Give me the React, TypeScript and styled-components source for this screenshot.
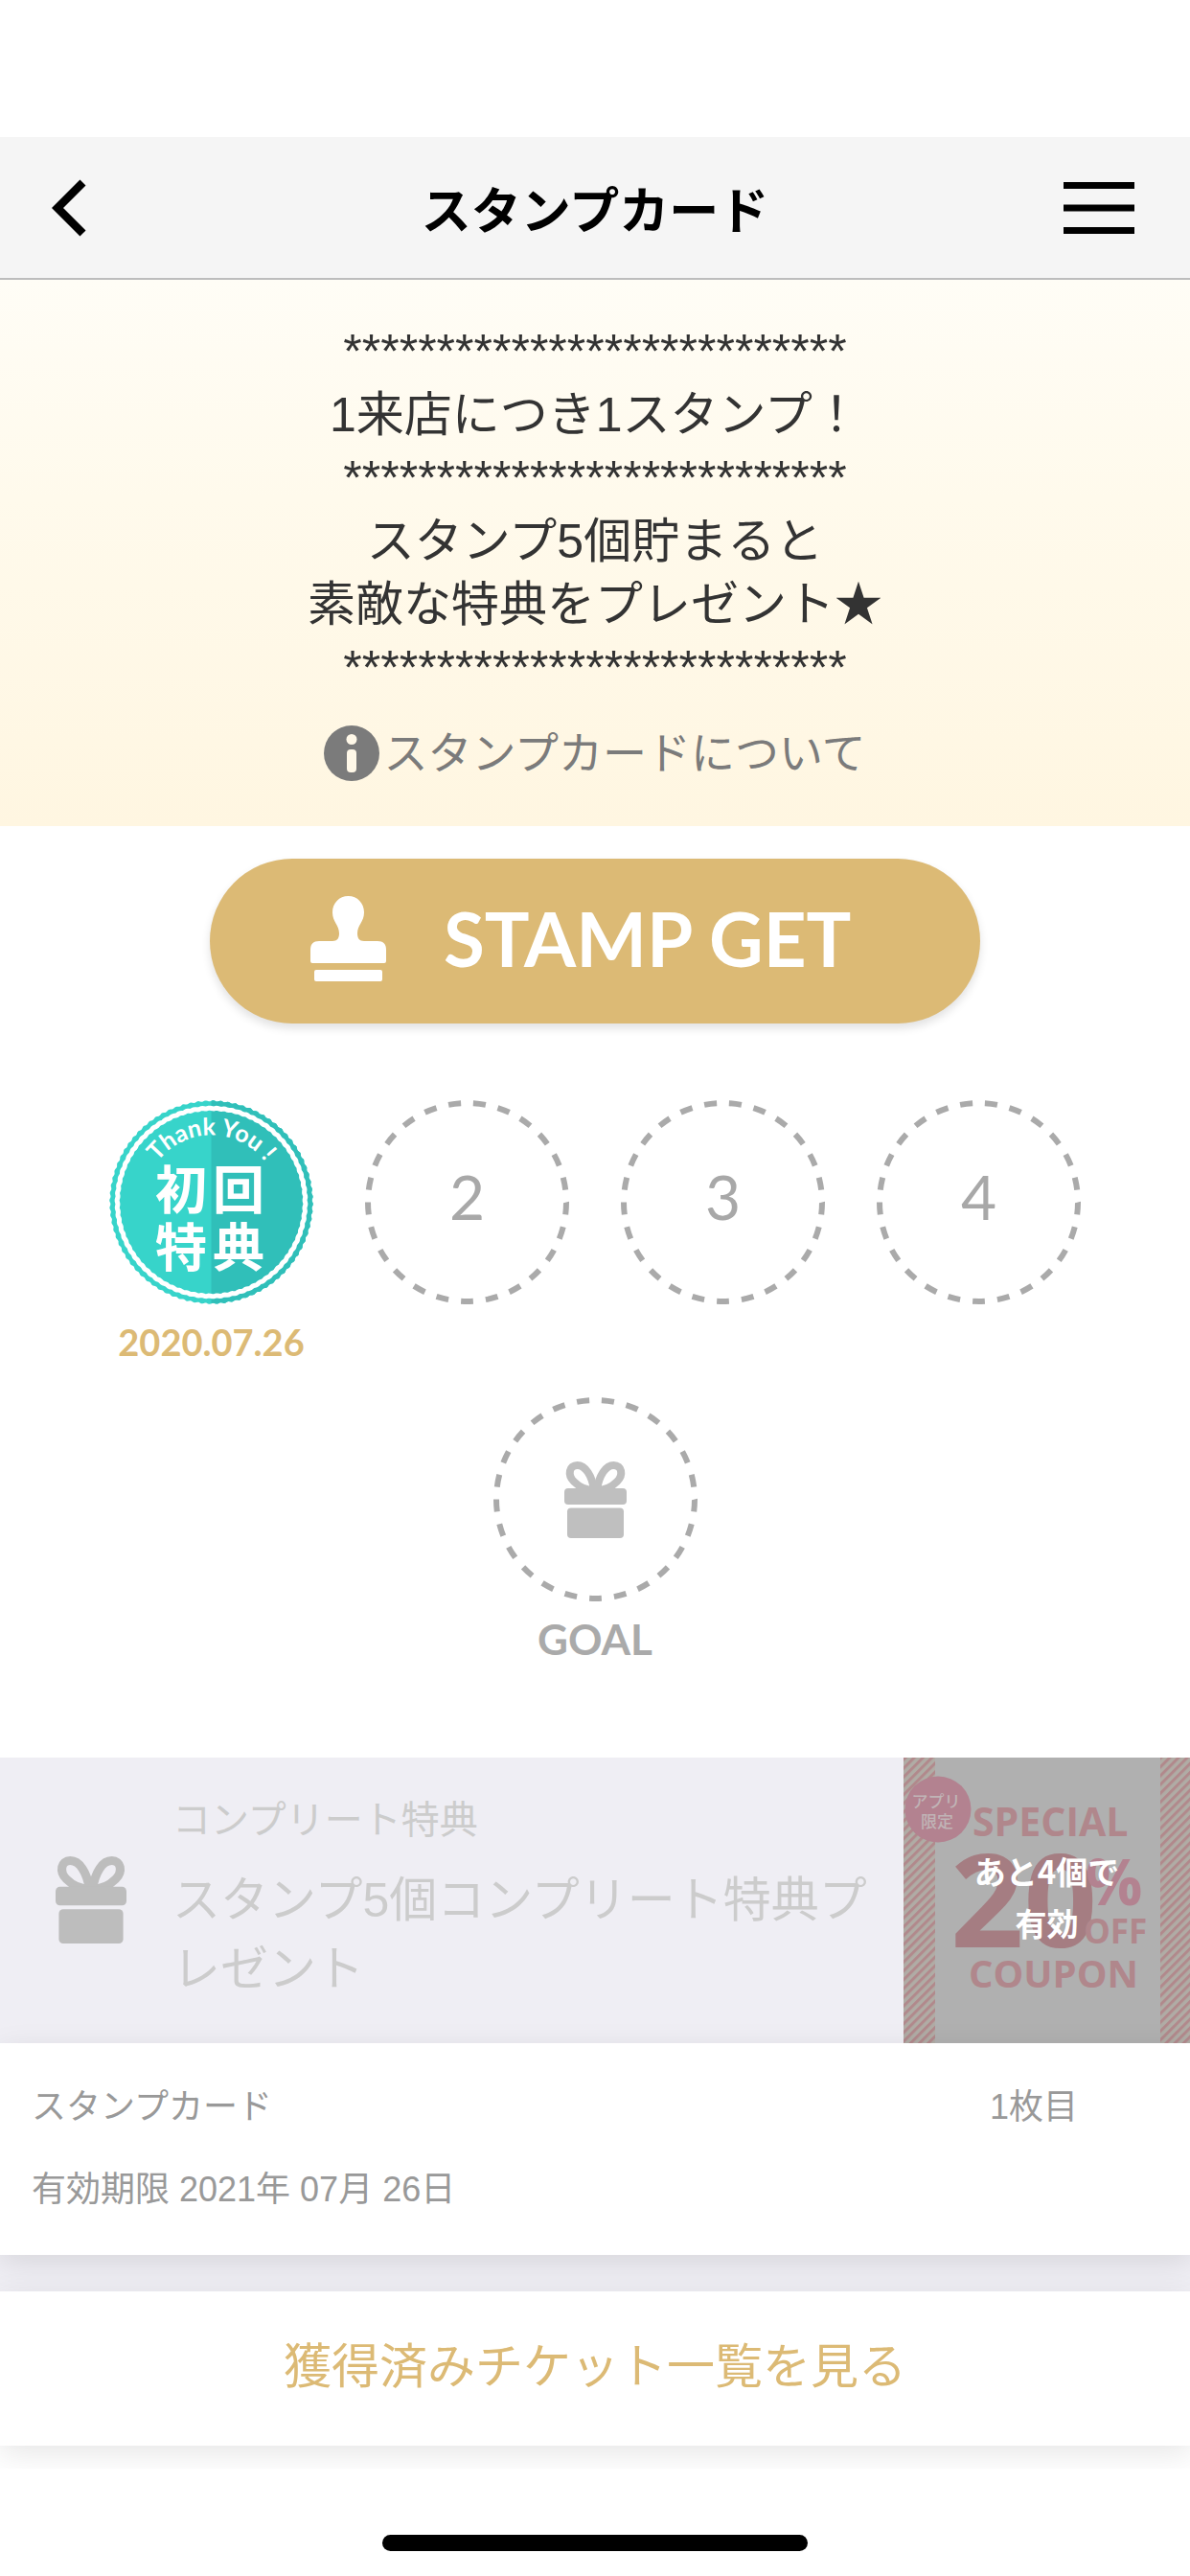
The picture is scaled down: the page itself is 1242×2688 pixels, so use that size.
import React from "react";
import styled, { createGlobalStyle } from "styled-components";

const GOLD = "#dcba75";
const GREY = "#aaaaaa";

const GlobalStyle = createGlobalStyle`
  *, *::before, *::after { box-sizing: border-box; }
  body {
    margin: 0;
    background: #ffffff;
    font-family: "Liberation Sans", "Noto Sans CJK JP", sans-serif;
  }
  button { font: inherit; color: inherit; border: 0; padding: 0; background: none; cursor: pointer; }
  p, h1, h2 { margin: 0; font-weight: 400; }
  svg { display: block; flex: none; }
`;

const Screen = styled.div`
  display: flex;
  flex-direction: column;
  min-height: 100vh;
  padding-top: 143px;
  overflow: hidden;
`;

const Header = styled.header`
  display: grid;
  grid-template-columns: 120px 1fr 120px;
  align-items: center;
  height: 149px;
  padding: 0 34px;
  background: #f5f5f5;
  border-bottom: 2px solid #bdbdbd;
`;

const Title = styled.h1`
  text-align: center;
  font-family: "Noto Sans CJK JP", sans-serif;
  font-size: 52px;
  line-height: 76px;
  font-weight: 700;
  color: #000000;
`;

const IconButton = styled.button<{ $side: "start" | "end" }>`
  display: flex;
  align-items: center;
  justify-content: flex-${(p) => p.$side};
  height: 120px;
  padding: 0 ${(p) => (p.$side === "start" ? 20 : 24)}px;
`;

const Banner = styled.section`
  display: flex;
  flex-direction: column;
  align-items: center;
  gap: 27px;
  padding: 42px 24px 47px;
  background: linear-gradient(#fffdf6, #fffaec 40%, #fff6e1);
`;

const Notice = styled.p`
  text-align: center;
  font-size: 50px;
  line-height: 66px;
  color: #333333;
`;

const InfoLink = styled.a`
  display: flex;
  align-items: center;
  gap: 4px;
  font-size: 46px;
  line-height: 58px;
  color: #7b7b7b;
  text-decoration: none;
`;

const StampArea = styled.section`
  display: flex;
  flex-direction: column;
  align-items: center;
  padding: 34px 24px 66px;
`;

const StampButton = styled.button`
  display: flex;
  align-items: center;
  gap: 60px;
  width: 804px;
  max-width: 100%;
  height: 172px;
  padding: 0 105px 6px;
  border-radius: 86px;
  background: ${GOLD};
  color: #ffffff;
  box-shadow: 0 5px 10px rgba(0, 0, 0, 0.12);
  && {
    font-family: Lato, sans-serif;
    font-size: 78px;
    font-weight: 700;
    line-height: 86px;
  }
`;

const StampList = styled.ol`
  display: flex;
  flex-wrap: wrap;
  justify-content: center;
  width: 1068px;
  max-width: 100%;
  margin: 80px 0 0;
  padding: 0;
  list-style: none;
`;

const StampCell = styled.li`
  display: flex;
  flex-direction: column;
  align-items: center;
  gap: 12px;
  width: 267px;
  height: 310px;
`;

const Slot = styled.div`
  display: grid;
  place-items: center;
  > * { grid-area: 1 / 1; }
`;

const SlotNumber = styled.span`
  font-family: Lato, sans-serif;
  font-size: 64px;
  font-weight: 400;
  line-height: 76px;
  padding-bottom: 12px;
  color: #a8a8a8;
`;

const Caption = styled.span<{ $tone: string; $large?: boolean }>`
  font-family: Lato, sans-serif;
  font-weight: 700;
  font-size: ${(p) => (p.$large ? 44 : 38)}px;
  line-height: 54px;
  color: ${(p) => p.$tone};
`;

const Reward = styled.section`
  display: flex;
  align-items: stretch;
  min-height: 298px;
  background: #efeef4;
`;

const RewardIcon = styled.div`
  display: flex;
  align-items: center;
  width: 180px;
  flex: none;
  padding-left: 58px;
`;

const RewardText = styled.div`
  flex: 1;
  padding: 35px 30px 33px 0;
  color: #cccccc;
`;

const RewardLabel = styled.p`
  font-size: 40px;
  line-height: 60px;
  margin-bottom: 18px;
`;

const RewardTitle = styled.h2`
  font-size: 50px;
  line-height: 72px;
  word-break: break-all;
`;

const Coupon = styled.div`
  display: grid;
  width: 299px;
  flex: none;
  > * { grid-area: 1 / 1; }
`;

const CouponStatus = styled.p`
  align-self: center;
  padding-bottom: 8px;
  text-align: center;
  font-family: "Noto Sans CJK JP", sans-serif;
  font-size: 33px;
  line-height: 54px;
  color: #ffffff;
  && { font-weight: 700; }
`;

const Lower = styled.div`
  display: flex;
  flex-direction: column;
  gap: 38px;
  background: linear-gradient(#efeef4 60%, #ffffff 60%);
  padding-bottom: 24px;
`;

const Card = styled.section`
  background: #ffffff;
  box-shadow: 0 8px 30px rgba(0, 0, 0, 0.1);
`;

const Meta = styled(Card)`
  padding: 24px 33px 25px;
  font-size: 36px;
  line-height: 86px;
  color: #999999;
`;

const MetaRow = styled.div`
  display: flex;
  justify-content: space-between;
  padding-right: 84px;
`;

const TicketLink = styled.a`
  display: grid;
  place-items: center;
  height: 161px;
  padding-bottom: 4px;
  font-size: 50px;
  line-height: 72px;
  color: ${GOLD};
  text-decoration: none;
`;

const Footer = styled.footer`
  position: relative;
  display: flex;
  justify-content: center;
  align-items: flex-end;
  flex: 1;
  min-height: 112px;
  padding-bottom: 26px;
  background: #ffffff;
`;

const HomeBar = styled.div`
  width: 444px;
  height: 17px;
  border-radius: 9px;
  background: #000000;
`;

function BackIcon() {
  return (
    <svg width="36" height="60" viewBox="0 0 36 60" aria-hidden="true">
      <path d="M32.500 3.500L6 30L32.500 56.500" fill="none" stroke="#000" strokeWidth="8.500" />
    </svg>
  );
}

function MenuIcon() {
  return (
    <svg width="74" height="56" viewBox="0 0 74 56" aria-hidden="true">
      <path d="M0 4.500H74M0 28H74M0 51.500H74" stroke="#000" strokeWidth="7" />
    </svg>
  );
}

function InfoIcon() {
  return (
    <svg width="58" height="58" viewBox="0 0 58 58" aria-hidden="true">
      <circle cx="29" cy="29" r="29" fill="#7b7b7b" />
      <circle cx="29" cy="14.500" r="5.500" fill="#fff8e8" />
      <rect x="24" y="25" width="10" height="24" rx="4" fill="#fff8e8" />
    </svg>
  );
}

function StampIcon() {
  return (
    <svg width="79" height="89" viewBox="0 0 79 89" fill="#fff" aria-hidden="true">
      <path d="M39.500 0C49 0 56 7.500 56 17C56 27 49 30 49 39C49 44 51 47 56 47H70C76 47 79 50 79 56V68Q79 70 77 70H2Q0 70 0 68V56C0 50 3 47 9 47H23C28 47 30 44 30 39C30 30 23 27 23 17C23 7.500 30 0 39.500 0Z" />
      <rect x="4" y="77" width="71" height="12" rx="2" />
    </svg>
  );
}

function GiftIcon({ width, color }: { width: number; color: string }) {
  const bow = "M31 30C29 15 22 4 13.500 4C5 4 3 14 10 21C16 27 23 30 31 30";
  return (
    <svg width={width} viewBox="0 0 65 80" aria-hidden="true">
      <path d={bow} fill="none" stroke={color} strokeWidth="8" />
      <path d={bow} fill="none" stroke={color} strokeWidth="8" transform="matrix(-1 0 0 1 65 0)" />
      <rect y="28" width="65" height="17" rx="4" fill={color} />
      <rect x="3" y="48.500" width="59" height="31.500" rx="4" fill={color} />
    </svg>
  );
}

function DashedRing() {
  return (
    <svg width="213" height="213" viewBox="0 0 213 213" aria-hidden="true">
      <circle
        cx="106.500"
        cy="106.500"
        r="103.500"
        fill="none"
        stroke={GREY}
        strokeWidth="6"
        pathLength={50}
        strokeDasharray="1 1"
        strokeDashoffset="0.5"
        transform="rotate(90 106.5 106.5)"
      />
    </svg>
  );
}

// Closed outline that ripples around a circle.
function ripple(radius: number, depth: number, waves: number) {
  const steps = waves * 6;
  const points = Array.from({ length: steps }, (_, i) => {
    const a = (i / steps) * Math.PI * 2;
    const r = radius + depth * Math.sin(a * waves);
    return `${(106.5 + r * Math.cos(a)).toFixed(2)} ${(106.5 + r * Math.sin(a)).toFixed(2)}`;
  });
  return `M${points.join("L")}Z`;
}

function FirstVisitStamp() {
  const outer = ripple(105.7, 0.6, 84);
  return (
    <svg width="213" height="213" viewBox="0 0 213 213" role="img" aria-label="Thank You ! 初回特典">
      <defs>
        <clipPath id="right-half">
          <rect x="106.500" width="107" height="213" />
        </clipPath>
        <path id="greeting-arc" d="M36.500 106.500A70 70 0 0 1 176.500 106.500" />
      </defs>
      <path d={outer} fill="#37d4ca" />
      <path d={outer} fill="#30bfb9" clipPath="url(#right-half)" />
      <path d={ripple(98, 0.4, 78)} fill="none" stroke="#fff" strokeWidth="5" />
      <g fill="#fff" textAnchor="middle">
        <text fontFamily="Lato, sans-serif" fontWeight="700" fontSize="25">
          <textPath href="#greeting-arc" startOffset="50%">Thank You !</textPath>
        </text>
        <g fontFamily="'Noto Sans CJK JP', sans-serif" fontWeight="700" fontSize="54">
          <text x="75" y="114">初</text>
          <text x="135" y="114">回</text>
          <text x="75" y="174">特</text>
          <text x="135" y="174">典</text>
        </g>
      </g>
    </svg>
  );
}

function CouponArt() {
  return (
    <svg width="299" height="298" viewBox="0 0 299 298" aria-hidden="true">
      <defs>
        <pattern id="stripes" width="6.500" height="6.500" patternUnits="userSpaceOnUse" patternTransform="rotate(-45)">
          <rect width="6.500" height="6.500" fill="#b0aca5" />
          <rect width="6.500" height="3" fill="#b1898c" />
        </pattern>
      </defs>
      <rect width="299" height="298" fill="#b0b0b0" />
      <rect width="33" height="298" fill="url(#stripes)" />
      <rect x="268" width="31" height="298" fill="url(#stripes)" />
      <circle cx="36" cy="54" r="34.500" fill="#b38290" />
      <g fontFamily="'Noto Sans CJK JP', sans-serif" fontWeight="500" fontSize="17" fill="#c0b4b6" textAnchor="middle">
        <text x="34" y="52">アプリ</text>
        <text x="35" y="73">限定</text>
      </g>
      <g fontFamily="'Open Sans', sans-serif" fontWeight="700" fill="#b0878c">
        <text x="72" y="82" fontSize="41">SPECIAL</text>
        <text x="49" y="198" fontSize="134" fill="#a57d82">20</text>
        <text x="190" y="154" fontSize="66" fill="#b38290">%</text>
        <text x="188" y="194" fontSize="35">OFF</text>
        <text x="68" y="240" fontSize="40">COUPON</text>
      </g>
    </svg>
  );
}

const STARS = "*".repeat(27);

const NOTICE_LINES = [
  STARS,
  "1来店につき1スタンプ！",
  STARS,
  "スタンプ5個貯まると",
  "素敵な特典をプレゼント★",
  STARS,
];

export default function App() {
  return (
    <>
      <GlobalStyle />
      <Screen>
        <Header>
          <IconButton type="button" aria-label="戻る" $side="start">
            <BackIcon />
          </IconButton>
          <Title>スタンプカード</Title>
          <IconButton type="button" aria-label="メニュー" $side="end">
            <MenuIcon />
          </IconButton>
        </Header>

        <Banner>
          <Notice>
            {NOTICE_LINES.map((line, i) => (
              <React.Fragment key={i}>
                {i > 0 && <br />}
                {line}
              </React.Fragment>
            ))}
          </Notice>
          <InfoLink href="#about">
            <InfoIcon />
            スタンプカードについて
          </InfoLink>
        </Banner>

        <StampArea>
          <StampButton type="button">
            <StampIcon />
            STAMP GET
          </StampButton>
          <StampList>
            <StampCell>
              <FirstVisitStamp />
              <Caption $tone={GOLD}>2020.07.26</Caption>
            </StampCell>
            {[2, 3, 4].map((n) => (
              <StampCell key={n}>
                <Slot>
                  <DashedRing />
                  <SlotNumber>{n}</SlotNumber>
                </Slot>
              </StampCell>
            ))}
            <StampCell>
              <Slot>
                <DashedRing />
                <GiftIcon width={65} color="#bfbfbf" />
              </Slot>
              <Caption $tone={GREY} $large>GOAL</Caption>
            </StampCell>
          </StampList>
        </StampArea>

        <Reward>
          <RewardIcon>
            <GiftIcon width={74} color="#bdbdbd" />
          </RewardIcon>
          <RewardText>
            <RewardLabel>コンプリート特典</RewardLabel>
            <RewardTitle>スタンプ5個コンプリート特典プレゼント</RewardTitle>
          </RewardText>
          <Coupon>
            <CouponArt />
            <CouponStatus>
              あと4個で
              <br />
              有効
            </CouponStatus>
          </Coupon>
        </Reward>

        <Lower>
          <Meta>
            <MetaRow>
              <span>スタンプカード</span>
              <span>1枚目</span>
            </MetaRow>
            <MetaRow>
              <span>有効期限 2021年 07月 26日</span>
            </MetaRow>
          </Meta>
          <Card>
            <TicketLink href="#tickets">獲得済みチケット一覧を見る</TicketLink>
          </Card>
        </Lower>

        <Footer>
          <HomeBar />
        </Footer>
      </Screen>
    </>
  );
}
